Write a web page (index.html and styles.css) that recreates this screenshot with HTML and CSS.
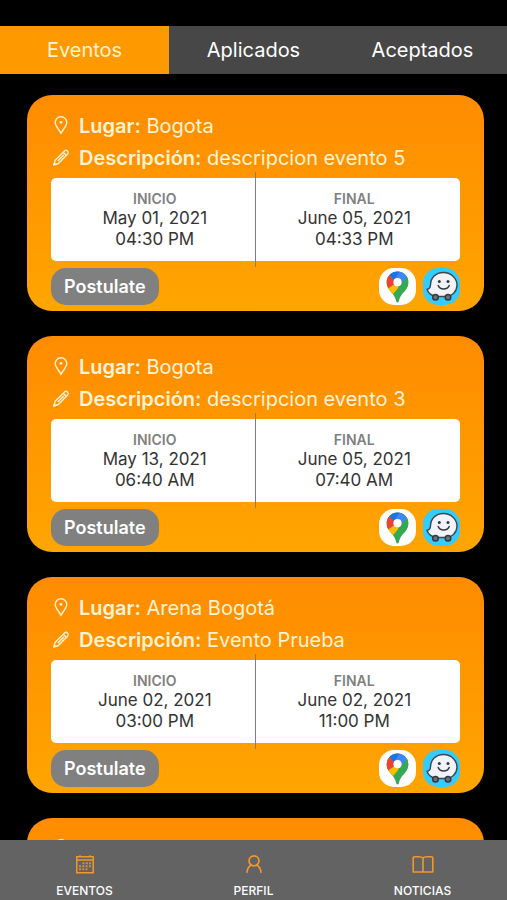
FILE: index.html
```html
<!DOCTYPE html>
<html lang="es">
<head>
    <meta charset="UTF-8">
    <meta name="viewport" content="width=device-width, initial-scale=1.0">
    <title>Eventos</title>
    <link rel="stylesheet" href="styles.css">
</head>
<body>
    <svg class="sprite" aria-hidden="true">
        <symbol id="pin" viewBox="0 0 20 20">
            <path d="M10 17.300C8 13.400 4.200 9.900 4.200 6.500a5.800 5.800 0 0 1 11.600 0C15.800 9.900 12 13.400 10 17.300z" fill="none" stroke="currentColor" stroke-width="1.400"/>
            <circle cx="10" cy="6.300" r="1.400" fill="currentColor"/>
        </symbol>
        <symbol id="pencil" viewBox="0 0 20 20">
            <path d="M2.800 17l1.400-4.800L13.600 2.900q1.500-1.200 2.900 .1t.2 2.900L7.400 15.500zM12.200 4.300l3 3M6.800 12.900l6-6" fill="none" stroke="currentColor" stroke-width="1.400" stroke-linejoin="round"/>
            <path d="M2.400 17.500l.9-3 2.200 2z" fill="currentColor"/>
        </symbol>
        <symbol id="maps" viewBox="0 0 37 37">
            <clipPath id="drop">
                <path d="M18.500 34.500c-1.300 0-1.300-1.600-2-3.700-1.400-4-3.700-5.600-5.800-8.500C8.800 19.700 7.700 17.300 7.700 14.200a10.800 10.800 0 0 1 21.600 0c0 3.100-1.100 5.500-3 8.100-2.100 2.900-4.400 4.500-5.800 8.500-.7 2.100-.7 3.700-2 3.700z"/>
            </clipPath>
            <g clip-path="url(#drop)">
                <path d="M0 0h37v37H0z" fill="#34a853"/>
                <path d="M0 20l10-3.500 8.500-2.300 3.300 2.700L12 28.500 6 27z" fill="#fbbc04"/>
                <path d="M10.300 7l8.200 7.200L9.500 24 0 20V7z" fill="#fbbc04"/>
                <path d="M10.300 7l8.200 7.200-9.500 6.300L3 17V7z" fill="#ea4335"/>
                <path d="M10.300 7L12 0h12l-1.500 4.500-7 8z" fill="#1a73e8"/>
                <path d="M21.500 2L32 5l-3.500 5-7.500 7-6-4.500z" fill="#4285f4"/>
                <path d="M28.200 8.500L19 19.500l2 6L37 20V8z" fill="#34a853"/>
            </g>
            <circle cx="18.500" cy="14.200" r="4.100" fill="#fff"/>
        </symbol>
        <symbol id="waze" viewBox="0 0 37 37">
            <path d="M20.500 4.500c-8 0-12.800 5.500-13 12.300-.1 3-1 4.300-3.500 4.500 1.200 3.800 4.800 6.500 9.500 7.200h9C29.500 28.200 34 23.200 34 17S28.500 4.500 20.500 4.500z" fill="#f1f3f6" stroke="#40454d" stroke-width="1.400" stroke-linejoin="round"/>
            <circle cx="12.500" cy="29.300" r="2.800" fill="#6b7079" stroke="#353a42" stroke-width="1.500"/>
            <circle cx="25" cy="29.300" r="2.800" fill="#6b7079" stroke="#353a42" stroke-width="1.500"/>
            <circle cx="16.300" cy="13.500" r="1.500" fill="#353a42"/>
            <circle cx="25" cy="13.500" r="1.500" fill="#353a42"/>
            <path d="M15.200 17.500c1.800 4.600 9.200 4.600 11 0" fill="none" stroke="#353a42" stroke-width="1.500" stroke-linecap="round"/>
        </symbol>
    </svg>

    <nav class="tabs">
        <button class="tab active" type="button">Eventos</button>
        <button class="tab" type="button">Aplicados</button>
        <button class="tab" type="button">Aceptados</button>
    </nav>

    <main class="events">
        <article class="card">
            <p class="info"><svg class="icon"><use href="#pin"/></svg><span><b>Lugar:</b> Bogota</span></p>
            <p class="info"><svg class="icon"><use href="#pencil"/></svg><span><b>Descripción:</b> descripcion evento 5</span></p>
            <div class="dates">
                <div class="date">
                    <h2>INICIO</h2>
                    <p>May 01, 2021</p>
                    <p>04:30 PM</p>
                </div>
                <div class="date">
                    <h2>FINAL</h2>
                    <p>June 05, 2021</p>
                    <p>04:33 PM</p>
                </div>
            </div>
            <div class="actions">
                <button class="apply" type="button">Postulate</button>
                <a class="app maps" href="#" aria-label="Google Maps"><svg><use href="#maps"/></svg></a>
                <a class="app waze" href="#" aria-label="Waze"><svg><use href="#waze"/></svg></a>
            </div>
        </article>

        <article class="card">
            <p class="info"><svg class="icon"><use href="#pin"/></svg><span><b>Lugar:</b> Bogota</span></p>
            <p class="info"><svg class="icon"><use href="#pencil"/></svg><span><b>Descripción:</b> descripcion evento 3</span></p>
            <div class="dates">
                <div class="date">
                    <h2>INICIO</h2>
                    <p>May 13, 2021</p>
                    <p>06:40 AM</p>
                </div>
                <div class="date">
                    <h2>FINAL</h2>
                    <p>June 05, 2021</p>
                    <p>07:40 AM</p>
                </div>
            </div>
            <div class="actions">
                <button class="apply" type="button">Postulate</button>
                <a class="app maps" href="#" aria-label="Google Maps"><svg><use href="#maps"/></svg></a>
                <a class="app waze" href="#" aria-label="Waze"><svg><use href="#waze"/></svg></a>
            </div>
        </article>

        <article class="card">
            <p class="info"><svg class="icon"><use href="#pin"/></svg><span><b>Lugar:</b> Arena Bogotá</span></p>
            <p class="info"><svg class="icon"><use href="#pencil"/></svg><span><b>Descripción:</b> Evento Prueba</span></p>
            <div class="dates">
                <div class="date">
                    <h2>INICIO</h2>
                    <p>June 02, 2021</p>
                    <p>03:00 PM</p>
                </div>
                <div class="date">
                    <h2>FINAL</h2>
                    <p>June 02, 2021</p>
                    <p>11:00 PM</p>
                </div>
            </div>
            <div class="actions">
                <button class="apply" type="button">Postulate</button>
                <a class="app maps" href="#" aria-label="Google Maps"><svg><use href="#maps"/></svg></a>
                <a class="app waze" href="#" aria-label="Waze"><svg><use href="#waze"/></svg></a>
            </div>
        </article>

        <article class="card">
            <p class="info"><svg class="icon"><use href="#pin"/></svg><span><b>Lugar:</b> Arena Bogotá</span></p>
        </article>
    </main>

    <nav class="bottom-nav">
        <a href="#">
            <svg viewBox="0 0 22 22" fill="none" stroke="currentColor" stroke-width="1.500">
                <path d="M2.800 3.800h16.400v16H2.800zM2.800 7h16.400M6 2.200v2M16 2.200v2"/>
                <path d="M8.500 10.300h8.500M5 13.300h12M5 16.300h8.500" stroke-width="2" stroke-dasharray="2 1.300" opacity=".8"/>
            </svg>
            EVENTOS
        </a>
        <a href="#">
            <svg viewBox="0 0 22 22" fill="none" stroke="currentColor" stroke-width="1.700" stroke-linecap="round">
                <circle cx="11" cy="7.800" r="5"/>
                <path d="M4 19.300c.3-3.500 2.200-6.300 4.500-7.300M18 19.300c-.3-3.500-2.200-6.300-4.500-7.300"/>
            </svg>
            PERFIL
        </a>
        <a href="#">
            <svg viewBox="0 0 22 22" fill="none" stroke="currentColor" stroke-width="1.600" stroke-linejoin="round">
                <path d="M11 5C10 4 8.800 3.700 7 3.700H3q-1.800 0-1.800 1.600V19H11zM11 5c1-1 2.200-1.300 4-1.300h4q1.800 0 1.800 1.600V19H11z"/>
            </svg>
            NOTICIAS
        </a>
    </nav>
</body>
</html>
```
FILE: styles.css
```css
*{
    box-sizing: border-box;
    margin: 0;
    padding: 0;
}
body{
    font-family: Inter, "Liberation Sans", sans-serif;
    display: flex;
    flex-direction: column;
    height: 100vh;
    padding-top: 26px;
    background-color: #000;
    overflow: hidden;
}
button{
    font-family: inherit;
    border: none;
    cursor: pointer;
}
a{
    text-decoration: none;
}
.sprite{
    position: absolute;
    width: 0;
    height: 0;
}
.tabs{
    display: grid;
    grid-template-columns: repeat(3, 1fr);
    flex: none;
}
.tab{
    height: 48px;
    font-size: 20px;
    color: #fff;
    background-color: #474747;
}
.tab.active{
    color: #fff3d6;
    background-color: #ff9900;
}
.events{
    flex: 1;
    min-height: 0;
    display: flex;
    flex-direction: column;
    gap: 25px;
    padding: 21px 23px 0 27px;
    overflow: hidden;
}
.card{
    flex: none;
    min-height: 216px;
    padding: 15px 24px 6px;
    border-radius: 25px;
    background: linear-gradient(#ff8c00, #ffa500);
}
.info{
    display: flex;
    align-items: center;
    gap: 8px;
    height: 32px;
    font-size: 20px;
    color: #fff3d6;
}
.info b{
    font-weight: 600;
}
.icon{
    flex: none;
    width: 20px;
    height: 20px;
}
.dates{
    position: relative;
    display: grid;
    grid-template-columns: 1fr 1fr;
    margin-top: 4px;
    padding: 11px 6px 11px 4px;
    border-radius: 5px;
    background-color: #fff;
}
.dates::after{
    content: "";
    position: absolute;
    top: -6px;
    bottom: -6px;
    left: calc(50% - 1px);
    width: 1px;
    background-color: #808080;
}
.date{
    text-align: center;
    font-size: 17px;
    line-height: 21px;
    color: #333;
}
.date h2{
    font-size: 14px;
    line-height: 19px;
    font-weight: 600;
    color: #808080;
}
.actions{
    display: flex;
    align-items: center;
    gap: 7px;
    margin-top: 7px;
}
.apply{
    height: 37px;
    margin-right: auto;
    padding: 0 13px;
    border-radius: 15px;
    font-size: 18px;
    font-weight: 600;
    color: #fff;
    background-color: #808080;
}
.app{
    width: 37px;
    height: 37px;
    border-radius: 15px;
    background-color: #fff;
}
.app svg{
    display: block;
    width: 100%;
    height: 100%;
}
.waze{
    background-color: #33ccff;
}
.bottom-nav{
    display: grid;
    grid-template-columns: repeat(3, 1fr);
    flex: none;
    height: 60px;
    background-color: #636363;
}
.bottom-nav a{
    display: flex;
    flex-direction: column;
    align-items: center;
    gap: 8px;
    padding-top: 13px;
    font-size: 12px;
    line-height: 15px;
    font-weight: 500;
    color: #fff;
}
.bottom-nav svg{
    width: 22px;
    height: 22px;
    color: #f0982d;
}
```
